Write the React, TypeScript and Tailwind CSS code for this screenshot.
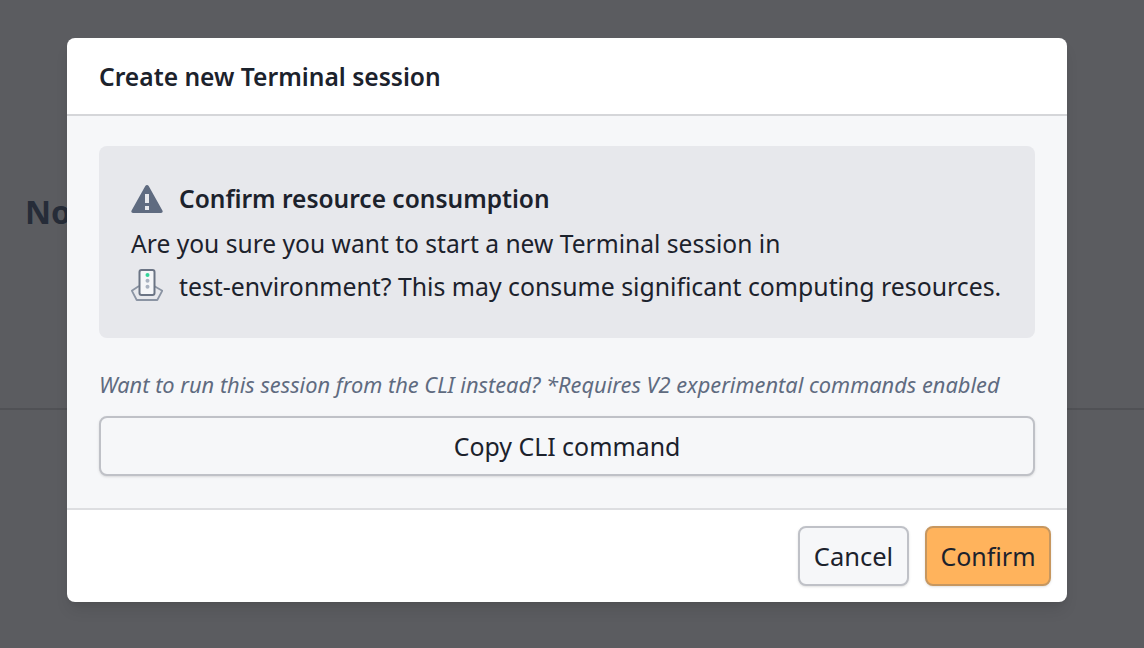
const font = { fontFamily: '"Noto Sans", sans-serif' };

function AlertIcon() {
  return (
    <svg className="h-[30px] w-[32px] shrink-0" viewBox="0 0 32 30" aria-hidden="true">
      <path
        fillRule="evenodd"
        fill="#5f6b80"
        d="M14.300 2 .6 26.600C-.1 27.900.6 29 2 29h28c1.400 0 2.100-1.100 1.400-2.400L17.700 2c-.8-1.400-2.600-1.400-3.400 0ZM14 10h4v9h-4v-9Zm0 12h4v4h-4v-4Z"
      />
    </svg>
  );
}

function EnvironmentIcon() {
  return (
    <svg className="h-[34px] w-[32px] shrink-0" viewBox="0 0 32 34" fill="none" aria-hidden="true">
      <path d="M8 17 .8 21.700 5.700 31h20.600l5-9.300L23 17" stroke="#8b94a3" strokeWidth="1.800" strokeLinejoin="round" />
      <rect x="8.500" y="1" width="15" height="25" rx="2" fill="#f5f6f8" stroke="#6b7484" strokeWidth="2" />
      <circle cx="16.500" cy="6" r="2" fill="#34d399" />
      <circle cx="16.500" cy="11.700" r="2" fill="#a9b2c0" />
      <circle cx="16.500" cy="17.700" r="2" fill="#a9b2c0" />
    </svg>
  );
}

export default function App() {
  return (
    <div className="relative h-[648px] w-[1144px] overflow-hidden bg-[#5b5c60]" style={font}>
      <div className="h-[410px] border-b-2 border-[#505155] pl-[25px] pt-[188px]">
        <h2 className="text-[32px] font-bold leading-[48px] text-[#262c38]">No</h2>
      </div>

      <div className="absolute left-[67px] top-[38px] flex w-[1000px] flex-col overflow-hidden rounded-lg bg-white text-[#1c222c] shadow-lg">
        <div className="flex h-[78px] items-center border-b-2 border-[#d5d6d9] px-8 pt-[2px]">
          <h1 className="text-[24.600px] font-semibold">Create new Terminal session</h1>
        </div>

        <div className="flex flex-col border-b-2 border-[#dddee1] bg-[#f6f7f9] px-8 pb-8 pt-[30px]">
          <div className="flex h-[192px] flex-col rounded-lg bg-[#e7e8ec] px-8 pt-[35px] leading-[42px]">
            <div className="mb-[6px] flex h-[36px] items-center gap-4">
              <AlertIcon />
              <span className="text-[24.500px] font-semibold">Confirm resource consumption</span>
            </div>
            <div className="text-[24.600px]">Are you sure you want to start a new Terminal session in</div>
            <div className="flex items-center gap-4 text-[24.820px]">
              <EnvironmentIcon />
              <span>test-environment? This may consume significant computing resources.</span>
            </div>
          </div>

          <p className="mt-[32px] text-[21.800px] italic leading-[30px] text-[#5f6b80]">
            Want to run this session from the CLI instead? *Requires V2 experimental commands enabled
          </p>

          <button
            type="button"
            className="mt-4 h-[60px] rounded-lg border-2 border-[#bfc1c7] bg-[#f6f7f9] pt-[1px] text-[24.900px] shadow-sm"
          >
            Copy CLI command
          </button>
        </div>

        <div className="flex h-[92px] items-start justify-end gap-4 px-4 pt-4">
          <button
            type="button"
            className="h-[60px] w-[111px] rounded-lg border-2 border-[#bfc1c7] bg-[#f6f7f9] text-[25.500px] shadow-sm"
          >
            Cancel
          </button>
          <button
            type="button"
            className="h-[60px] w-[126px] rounded-lg border-2 border-[#c7975f] bg-[#ffb35c] pt-[1px] text-[25px] shadow-sm"
          >
            Confirm
          </button>
        </div>
      </div>
    </div>
  );
}
